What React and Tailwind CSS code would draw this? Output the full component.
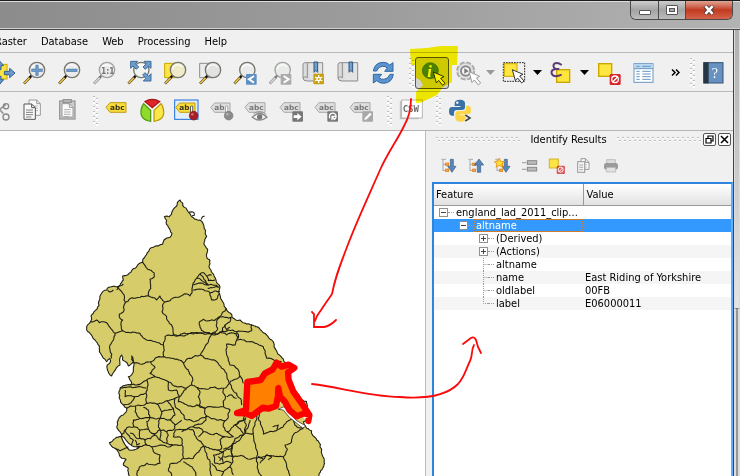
import React from "react";

/* ---------- map geometry ---------- */

function roughen(text, seed, close) {
  const pts = text.split(" ").map((p) => p.split(",").map(Number));
  if (close) pts.push(pts[0]);
  let s = seed * 7919 + 13;
  const rnd = () => {
    s = (s * 16807) % 2147483647;
    return s / 2147483647 - 0.5;
  };
  const out = [pts[0]];
  const split = (a, b) => {
    const dx = b[0] - a[0];
    const dy = b[1] - a[1];
    const len = Math.hypot(dx, dy);
    if (len < 7) {
      out.push(b);
      return;
    }
    const k = rnd() * 0.32;
    const m = [(a[0] + b[0]) / 2 - dy * k, (a[1] + b[1]) / 2 + dx * k];
    split(a, m);
    split(m, b);
  };
  for (let i = 1; i < pts.length; i++) split(pts[i - 1], pts[i]);
  return "M" + out.map((p) => p[0].toFixed(1) + " " + p[1].toFixed(1)).join("L") + (close ? "Z" : "");
}

const COAST =
  "352,38 360,30 367,38 368,46 385,66 395,80 405,88 420,90 428,98 436,120 440,140 432,158 443,178 440,200 450,212 447,230 453,240 462,258 468,270 480,290 480,315 488,335 495,352 512,370 516,382 540,390 560,402 575,404 600,418 620,435 635,450 642,470 652,488 665,502 672,515 685,522 705,532 684,545 700,605 755,680 730,695 740,715 755,722 770,750 785,780 792,805 788,835 778,850 770,880 200,880 208,858 205,835 190,825 198,808 178,795 165,775 148,758 185,740 180,725 170,710 172,695 190,675 200,655 190,645 178,625 180,595 210,585 215,578 205,560 220,545 222,520 215,498 220,515 205,528 188,510 185,495 180,525 162,545 155,558 145,545 142,525 152,512 150,505 140,515 130,505 118,485 118,468 105,450 90,430 80,416 92,395 93,378 100,370 117,345 120,325 128,305 140,300 145,292 162,288 172,290 180,285 190,270 188,258 200,256 215,242 230,230 248,216 255,200 262,188 280,172 295,168 308,162 312,150 330,142 336,130 325,112 320,92 313,80 328,80 335,68 350,48";

const NORTH = [
  "248,216 258,232 270,240 282,248 282,262 270,268 272,285 266,305 266,318",
  "172,290 180,300 188,310 192,330 196,338 225,325 266,318 290,330 300,318 313,335",
  "313,335 330,332 350,322 380,312 390,318 396,300 398,285 410,265 420,252",
  "196,338 190,352 192,362 178,372 180,385 188,390 188,422 165,430",
  "313,335 308,350 306,365 320,380 328,400 338,412 340,436",
  "92,395 110,390 118,398 130,395 150,412 165,430",
  "188,422 210,428 240,430 260,450 310,465",
  "340,436 315,440 310,465 310,500",
  "340,436 370,430 400,432 420,428 450,430 465,432",
  "420,252 430,248 440,258 455,255",
  "410,265 430,275 445,285 400,285",
  "420,252 432,268 445,285",
  "440,258 445,272 465,270",
  "445,285 475,290",
  "398,300 425,298 445,304 450,310 480,305",
  "443,295 478,292",
  "450,310 455,330 470,328 480,310",
  "480,380 490,365 500,355",
  "480,380 515,382",
  "418,395 430,388 445,392 480,380",
  "418,395 420,412 450,430",
  "480,380 470,395 465,432",
  "465,432 485,425 495,405 510,395 512,382",
  "495,405 500,420 510,412",
  "485,425 505,420 530,425 575,422 575,404",
  "530,425 535,445",
  "190,282 178,288 170,300",
  "160,300 150,306 143,300",
  "387,66 402,68 403,76 396,78",
  "424,88 428,80 434,78",
];

const MIDDLE = [
  "165,10 160,30 150,45 150,62 155,85",
  "340,12 370,18 400,8 420,10 455,12 465,5",
  "455,12 445,35 430,60 422,75 395,85 370,98 345,88 310,80 285,85 272,95 220,98",
  "272,95 285,112 270,130 285,140 260,150 230,165 210,165",
  "370,98 385,120 398,145 395,165 375,175 350,170 325,155 300,145 285,140",
  "422,75 450,88 470,95 485,115 500,130 508,160 490,175 440,178 410,172 395,165",
  "455,12 465,15 480,5 500,15 530,10",
  "508,160 520,150 540,138 535,120 510,105 505,85 498,60 500,42 525,45 530,30 528,10",
  "508,160 515,175 530,190 545,225",
  "500,200 515,195 530,205",
  "540,138 550,160",
  "260,150 258,190 262,220 290,222 320,212 345,205 358,200 350,180 325,180 325,155",
  "258,190 240,195 225,200 215,215 190,225",
  "180,175 240,170 258,175",
  "195,180 195,200 225,200",
  "358,200 380,175",
  "358,200 355,215 385,228 410,225 435,235 440,258 400,275 375,268 365,250 350,235 345,205",
  "410,172 420,185 415,200 418,225 410,225",
  "418,225 435,235 490,230 490,175",
  "440,258 470,270 495,272 505,260 510,240 490,230",
  "500,305 520,290 550,270 552,250",
  "495,272 490,290 500,305",
  "440,258 438,270 400,290 385,295 365,305",
  "400,290 430,305 470,310 495,320 520,320 500,305",
  "200,235 225,228 262,220",
  "225,228 225,245 240,265 270,262 300,265 305,245 290,222",
  "270,262 265,240 250,232",
  "305,245 325,240 340,235",
  "240,265 220,270 222,290 240,300 265,298 275,310 300,300 300,265",
  "265,298 260,275 270,262",
  "300,265 330,270 345,255 340,235 320,212",
  "330,270 345,285 340,300 320,305 300,300",
  "345,285 365,270",
  "345,300 385,295",
  "345,300 340,320 365,325 365,345 340,345 320,340 325,315 320,305",
  "240,300 240,325 255,330 285,315 300,330 320,340",
  "300,330 300,300",
  "285,315 275,310",
  "255,330 260,345 230,352",
  "222,290 195,300 205,315 220,330 215,345",
  "195,300 185,315",
  "210,310 220,312 230,325 240,325",
  "225,330 230,345 240,340",
  "260,345 275,350 300,345 320,350 340,345",
  "275,350 280,365 300,375 300,400 285,405 260,400 240,410 232,438",
  "365,345 370,385 350,400 330,402 325,420 335,438",
  "370,385 400,385 410,370 430,348 410,325 400,300 385,295",
  "370,395 395,410 408,438",
  "430,348 440,370 450,395 450,415 455,438",
  "415,320 430,305",
  "430,348 470,360 485,355 480,330 495,320",
  "470,360 490,365 515,355 518,340 545,320 550,315 525,285",
  "460,375 490,365 490,400 465,400 460,375",
  "475,380 485,385 478,392",
  "515,355 520,380",
  "490,380 505,378 520,380",
  "490,400 505,395 515,400",
  "520,380 510,410 520,435",
  "455,400 470,420 490,425 510,410",
  "490,425 485,438",
  "165,355 180,362 205,350",
];

const EAST = [
  "110,30 140,35 165,40 190,50 195,70 200,85 225,92 245,95",
  "135,265 135,310 145,290 150,270",
  "110,285 115,275 130,272 138,262",
  "170,255 165,285 160,310 135,310 105,325 98,345 70,358",
  "180,240 175,265 185,290 190,312 220,305 250,290 275,265",
  "218,290 235,285 230,298",
  "275,265 290,290 310,295",
  "310,295 280,315 275,335 255,345 262,360 250,380 260,405 270,438",
  "160,310 165,340 170,360 170,385 175,420 185,438",
  "170,385 200,375 235,380 250,380",
  "175,378 190,388 200,375 215,380 205,390",
  "98,345 100,380 130,378 170,385",
  "190,388 180,400",
];

const RIDING =
  "M142 156L182 150L195 130L218 118L230 98L245 110L266 104L283 114L264 127L266 150L280 185L305 220L328 255L325 273L328 255L312 250L290 259L268 240L255 215L240 200L235 174L234 198L228 228L205 236L188 233L155 258L138 250L111 249L138 240Z";

function DistrictMap() {
  return (
    <svg className="block h-[345px] w-[425px]" viewBox="-180 -177 1275 1035" role="img" aria-label="District map of northern England">
      <g strokeLinejoin="round" stroke="#1c1c14" strokeWidth="3.2" fill="none">
        <path d={roughen(COAST, 5, true)} fill="#d7cc6a" />
        {NORTH.map((b, i) => <path key={i} d={roughen(b, i + 40)} />)}
        <g transform="translate(0 420)">
          <path d="M183 318Q192 345 208 360Q225 364 240 350L222 350Q206 345 192 322Z" fill="#fff" />
          {MIDDLE.map((b, i) => <path key={i} d={roughen(b, i + 90)} />)}
        </g>
        <g transform="translate(420 420)">
          {EAST.map((b, i) => <path key={i} d={roughen(b, i + 180)} />)}
          <path d="M234 238L252 230L270 250L290 272L318 288L308 294L268 262L250 240Z" fill="#fff" strokeWidth="2" />
          <path d="M310 262L345 260L330 285Z" fill="#fff" stroke="none" />
          <path d={RIDING} fill="#ff8000" stroke="#f00" strokeWidth="19" strokeLinecap="round" />
        </g>
      </g>
    </svg>
  );
}

/* ---------- icons ---------- */

function Icon({ children }) {
  return (
    <svg className="block size-6 shrink-0 overflow-visible" viewBox="0 0 72 72" fill="none" aria-hidden="true">
      {children}
    </svg>
  );
}

function Lens({ gray, x = 45, fill = "#e9ebe9" }) {
  return (
    <>
      <path d={`M${x - 39} 68L${x - 20} 48`} stroke={gray ? "#8a8a8a" : "#5d5230"} strokeWidth="8" />
      <path d={`M${x - 38} 67L${x - 20} 48`} stroke={gray ? "#dcdcdc" : "#f8c53a"} strokeWidth="4" />
      <path d={`M${x - 22} 50L${x - 16} 43`} stroke={gray ? "#777" : "#111"} strokeWidth="7" />
      <circle cx={x} cy="27" r="23" fill={fill} stroke={gray ? "#a3a3a3" : "#77776f"} strokeWidth="4" />
      <path d={`M${x - 17} 24a17 17 0 0 1 30 -6`} stroke="#fff" strokeWidth="4" opacity=".8" />
    </>
  );
}

const Cursor = ({ x, y, fill = "#fff", stroke = "#333" }) => (
  <path d="M0 0L32 14L22 19L35 34L28 40L16 25L9 33Z" transform={`translate(${x} ${y})`} fill={fill} stroke={stroke} strokeWidth="3" />
);

function Tag({ gray, x = 2, y = 12 }) {
  return (
    <g transform={`translate(${x} ${y})`}>
      <path d="M2 16L14 2H62V31H14Z" fill={gray ? "#dedede" : "#f7dc3c"} stroke={gray ? "#a8a8a8" : "#c19d10"} strokeWidth="3" />
      <text x="14" y="24" className="font-['DejaVu_Sans'] text-[22px] font-bold" fill={gray ? "#777" : "#3b3416"}>abc</text>
    </g>
  );
}

function PinTag({ gray }) {
  const c = gray ? "#8b8b8b" : "#a91e22";
  return (
    <Icon>
      {!gray && <rect x="-1" y="3" width="70" height="58" stroke="#1a6fdc" strokeWidth="3" fill="#e4eefa" />}
      <path d="M2 25L14 12H60V40H14Z" fill={gray ? "#dedede" : "#f7dc3c"} stroke={gray ? "#a8a8a8" : "#c19d10"} strokeWidth="3" />
      <text x="13" y="34" className="font-['DejaVu_Sans'] text-[22px] font-bold" fill={gray ? "#777" : "#3b3416"}>ab</text>
      <path d="M50 24V42" stroke={gray ? "#999" : "#444"} strokeWidth="9" strokeLinecap="round" />
      <path d="M50 24V42" stroke="#fff" strokeWidth="4" strokeLinecap="round" />
      <circle cx="56" cy="50" r="13" fill={c} stroke={gray ? "#7b7b7b" : "#7d1518"} strokeWidth="2" />
      <circle cx="52" cy="46" r="4" fill="#fff" opacity=".35" />
    </Icon>
  );
}

function TagWith({ kind }) {
  return (
    <Icon>
      <Tag gray x={-2} y={9} />
      {kind === "eye" && (
        <g>
          <path d="M22 55Q44 32 66 55Q44 72 22 55Z" fill="#f4f4f4" stroke="#888" strokeWidth="4" />
          <circle cx="44" cy="54" r="8" fill="#777" />
          <path d="M26 44Q44 30 64 46" stroke="#999" strokeWidth="3" />
        </g>
      )}
      {kind !== "eye" && <rect x="37" y="37" width="32" height="31" rx="3" fill={kind === "edit" ? "#a8a8a8" : "#777"} />}
      <g transform="translate(4 0)">
        {kind === "move" && <path d="M37 49H48V42L61 53L48 64V57H37Z" fill="#fff" />}
        {kind === "turn" && <path d="M41 58A10 10 0 1 1 54 61L47 52M47 64V52H58" stroke="#fff" strokeWidth="4" />}
        {kind === "edit" && <path d="M39 63L41 56L56 41L61 46L46 61Z" fill="#fff" />}
      </g>
    </Icon>
  );
}

const Book = ({ extra }) => (
  <Icon>
    <path d="M9 5H62V60H15Q3 60 3 51V12Q3 5 9 5Z" fill="#dcdcdc" stroke="#8d8d8d" strokeWidth="3" />
    <path d="M16 6V50M16 50Q4 44 4 52" stroke="#8d8d8d" strokeWidth="3" />
    <path d="M22 8H60V57H22Z" fill="#e6e6e6" opacity=".7" />
    <path d="M36 3H47V34L41 28L36 34Z" fill="#6f9fd0" stroke="#31567f" strokeWidth="3" />
    {extra && (
      <>
        <rect x="34" y="38" width="32" height="32" rx="3" fill="#c8a010" />
        <path d="M50 42V66M39 48L61 60M61 48L39 60" stroke="#fff" strokeWidth="4" />
        <circle cx="50" cy="54" r="7" fill="#fff" />
        <circle cx="50" cy="54" r="3" fill="#c8a010" />
      </>
    )}
  </Icon>
);

const NoSign = ({ x, y, soft }) => (
  <g transform={`translate(${x} ${y})`} opacity={soft ? 0.75 : 1}>
    <rect width="33" height="33" rx="4" fill="#d8262b" />
    <circle cx="16" cy="16" r="10" stroke="#fff" strokeWidth="4" />
    <path d="M9 24L24 9" stroke="#fff" strokeWidth="4" />
  </g>
);

const Page = ({ x, y, w = 34, h = 46, dark = "#555" }) => (
  <g transform={`translate(${x} ${y})`}>
    <path d={`M0 0H${w - 11}L${w} 11V${h}H0Z`} fill="#fafafa" stroke={dark} strokeWidth="3" />
    <path d={`M${w - 11} 0V11H${w}`} stroke={dark} strokeWidth="3" />
    <path d={`M6 18H${w - 7}M6 25H${w - 7}M6 32H${w - 7}M6 39H${w - 12}`} stroke={dark} strokeWidth="3" opacity=".75" />
  </g>
);

const ICONS = {
  pan: (
    <Icon>
      <rect x="22" y="10" width="38" height="44" fill="#fbe443" stroke="#c9a600" strokeWidth="3" />
      <path d="M84 36L68 22V31H52V41H68V50ZM38 0L50 14H42V26H34V14H26ZM38 70L50 56H42V46H34V56H26Z" fill="#6a9acb" stroke="#35608f" strokeWidth="3" />
    </Icon>
  ),
  zoomIn: <Icon><Lens /><path d="M45 11V44M28 28H62" stroke="#4a78a8" strokeWidth="9" /><path d="M45 13V42M30 28H60" stroke="#6d9dcd" strokeWidth="5" /></Icon>,
  zoomOut: <Icon><Lens /><path d="M28 28H61" stroke="#4a78a8" strokeWidth="9" /><path d="M30 28H59" stroke="#6d9dcd" strokeWidth="5" /></Icon>,
  native: <Icon><Lens gray /><text x="27" y="38" className="font-['DejaVu_Sans_Condensed','DejaVu_Sans'] text-[25px] font-bold" fill="#777">1:1</text></Icon>,
  full: (
    <Icon>
      <Lens x={43} fill="#f1f3f1" />
      <path d="M11 1H32L25 8L35 18L28 25L18 15L11 22ZM72 1V22L65 15L55 25L48 18L58 8L51 1ZM72 60H49L57 52L47 42L54 35L65 46L72 38Z" fill="#6d9dcd" stroke="#3f6c9c" strokeWidth="3" />
    </Icon>
  ),
  zoomSel: <Icon><path d="M8 7H48V50H8Z" fill="#fbe443" stroke="#c9a600" strokeWidth="3" /><Lens x={48} fill="#efebc8" /></Icon>,
  zoomLayer: <Icon><path d="M8 7H48V50H8Z" fill="#ececec" stroke="#8d8d8d" strokeWidth="3" /><Lens x={48} fill="#e2e2e2" /></Icon>,
  last: <Icon><Lens x={46} /><rect x="42" y="39" width="32" height="32" rx="2" fill="#5e90c4" /><path d="M66 45L51 55L66 65" stroke="#fff" strokeWidth="6" /></Icon>,
  next: <Icon><Lens x={47} gray /><rect x="41" y="39" width="32" height="32" rx="2" fill="#ababab" /><path d="M50 45L65 55L50 65" stroke="#fff" strokeWidth="6" /></Icon>,
  newMark: <Book extra />,
  marks: <Book />,
  refresh: (
    <Icon>
      <path d="M4 30Q8 4 34 4Q46 4 53 12L63 5V31H38L46 21Q40 15 32 16Q20 17 14 30Z" fill="#5c92cd" stroke="#2f68a5" strokeWidth="3" />
      <path d="M64 40Q60 66 35 67Q22 67 14 59L4 66V40H29L21 50Q28 56 36 55Q48 54 54 40Z" fill="#5c92cd" stroke="#2f68a5" strokeWidth="3" />
    </Icon>
  ),
  identify: (
    <Icon>
      <circle cx="31" cy="29" r="24" fill="#4d87b8" stroke="#376b93" strokeWidth="2" />
      <text x="22" y="47" className="font-['Liberation_Serif'] text-[50px] font-bold italic" fill="#fff">i</text>
      <Cursor x={40} y={33} />
    </Icon>
  ),
  action: (
    <Icon>
      <circle cx="32" cy="30" r="24" fill="#e2e2e2" stroke="#a8a8a8" strokeWidth="9" strokeDasharray="14 5" />
      <circle cx="32" cy="30" r="23" fill="#e6e6e6" stroke="#bbb" strokeWidth="2" />
      <circle cx="32" cy="30" r="14" fill="#f5f5f5" stroke="#8a8a8a" strokeWidth="6" />
      <path d="M28 22L41 30L28 38Z" fill="#777" />
      <Cursor x={42} y={32} stroke="#999" />
    </Icon>
  ),
  select: (
    <Icon>
      <rect x="4" y="5" width="64" height="56" stroke="#222" strokeWidth="3" strokeDasharray="5 3" />
      <rect x="7" y="8" width="38" height="38" fill="#fde63f" stroke="#c9a600" strokeWidth="3" />
      <Cursor x={31} y={26} />
    </Icon>
  ),
  expression: (
    <Icon>
      <rect x="23" y="26" width="39" height="38" fill="#fde63f" stroke="#c9a600" strokeWidth="4" />
      <path d="M38 12Q26 2 16 8Q9 17 20 24Q5 26 8 38Q15 52 38 41M20 24H31" stroke="#5e3a72" strokeWidth="6" />
    </Icon>
  ),
  deselect: <Icon><rect x="8" y="8" width="39" height="38" fill="#fde63f" stroke="#c9a600" strokeWidth="4" /><NoSign x={41} y={39} /></Icon>,
  table: (
    <Icon>
      <rect x="9" y="8" width="57" height="56" fill="#fff" stroke="#6795c4" strokeWidth="3" />
      <rect x="10" y="9" width="55" height="14" fill="#b7d8ee" />
      <path d="M9 23H66M16 16H26M34 16H59M16 31H26M34 31H59M16 39H26M34 39H59M16 47H26M34 47H59M16 55H26M34 55H59" stroke="#6795c4" strokeWidth="3" />
    </Icon>
  ),
  help: (
    <Icon>
      <rect x="5" y="5" width="58" height="61" fill="#6791c0" stroke="#34516f" strokeWidth="3" />
      <rect x="5" y="4" width="15" height="63" fill="#263645" />
      <text x="29" y="50" className="font-['Liberation_Serif'] text-[42px]" fill="#fff">?</text>
    </Icon>
  ),
  cut: <Icon><path d="M20 8L52 44M60 16L30 40" stroke="#999" strokeWidth="5" /><circle cx="60" cy="22" r="8" stroke="#888" strokeWidth="4" /><circle cx="60" cy="54" r="9" stroke="#888" strokeWidth="4" /></Icon>,
  copy: <Icon><Page x={24} y={3} dark="#999" /><Page x={9} y={15} /></Icon>,
  paste: <Icon><rect x="11" y="6" width="46" height="54" fill="#ccc" stroke="#999" strokeWidth="4" /><rect x="21" y="2" width="25" height="8" fill="#bbb" stroke="#888" strokeWidth="3" /><Page x={18} y={14} w={33} h={40} dark="#999" /></Icon>,
  label: <Icon><Tag x={1} y={9} /></Icon>,
  diagram: (
    <Icon>
      <circle cx="37" cy="35" r="33" fill="#fff" />
      <path d="M37 26L15 8Q37 -6 59 8Z" fill="#e02626" stroke="#a51818" strokeWidth="4" />
      <path d="M32 34V67Q-3 62 4 30Q6 20 11 14Z" fill="#8edb2c" stroke="#559a12" strokeWidth="4" />
      <path d="M42 34V67Q77 62 70 30Q68 20 63 14Z" fill="#fbe74a" stroke="#bd9c0e" strokeWidth="4" />
    </Icon>
  ),
  pin: <PinTag />,
  pinOff: <PinTag gray />,
  showLabels: <TagWith kind="eye" />,
  moveLabel: <TagWith kind="move" />,
  turnLabel: <TagWith kind="turn" />,
  editLabel: <TagWith kind="edit" />,
  csw: (
    <Icon>
      <path d="M4 8H58V59H4Z" fill="#c9c9c9" stroke="#aaa" strokeWidth="2" />
      <rect x="8" y="3" width="62" height="54" fill="#fff" stroke="#b5b5b5" strokeWidth="3" />
      <text x="11" y="38" className="font-['DejaVu_Sans_Mono'] text-[27px] font-bold" fill="#6b6b6b">CSW</text>
    </Icon>
  ),
  python: (
    <Icon>
      <path d="M36 2Q20 2 20 13V21H37V24H12Q3 24 3 37Q3 50 12 50H18V41Q18 33 27 33H42Q51 33 51 25V13Q51 2 36 2Z" fill="#3872a4" />
      <path d="M38 68Q54 68 54 57V49H37V46H60Q69 46 69 33Q69 20 60 20H54V28Q54 36 46 36H31Q22 36 22 45V57Q22 68 38 68Z" fill="#fbd548" />
      <circle cx="28" cy="11" r="3.5" fill="#fff" />
      <path d="M52 48L66 57L52 66" stroke="#fff" strokeWidth="9" />
      <path d="M52 48L66 57L52 66" stroke="#444" strokeWidth="5" />
    </Icon>
  ),
};

/* ---------- panel icons (3 units per pixel, 18px box) ---------- */

function SmallIcon({ children }) {
  return <svg className="block size-[18px]" viewBox="0 0 54 54" fill="none" aria-hidden="true">{children}</svg>;
}

const Branches = () => (
  <>
    <path d="M4 7H18M9 8V42M9 22H18M9 40H18" stroke="#aaa" strokeWidth="3" />
    <rect x="17" y="18" width="9" height="8" fill="#f7a23c" stroke="#e07b10" strokeWidth="2" />
    <rect x="17" y="36" width="9" height="8" fill="#f7a23c" stroke="#e07b10" strokeWidth="2" />
  </>
);
const Down = () => <path d="M31 7H40V28H48L36 46L23 28H31Z" fill="#5b86b3" stroke="#365f8c" strokeWidth="2" />;

const PANEL_ICONS = [
  ["Expand tree", <SmallIcon><Branches /><Down /></SmallIcon>],
  ["Collapse tree", <SmallIcon><Branches /><path d="M31 46H41V24H50L36 6L22 24H31Z" fill="#5b86b3" stroke="#365f8c" strokeWidth="2" /></SmallIcon>],
  ["Expand new results", <SmallIcon><Branches /><Down /><path d="M16 3L20 13L31 14L23 21L26 31L16 25L6 31L9 21L1 14L12 13Z" fill="#fbe03c" stroke="#eda01c" strokeWidth="3" /></SmallIcon>],
  ["Open form", <SmallIcon><path d="M3 17H16M3 37H16" stroke="#aaa" strokeWidth="4" /><rect x="19" y="11" width="28" height="11" fill="#bbb" stroke="#888" strokeWidth="3" /><rect x="19" y="31" width="28" height="11" fill="#bbb" stroke="#888" strokeWidth="3" /></SmallIcon>],
  ["Clear results", <SmallIcon><rect x="4" y="6" width="27" height="27" fill="#fbe443" stroke="#d2b32a" strokeWidth="3" /><g transform="translate(26 26) scale(.75)"><NoSign x={0} y={0} soft /></g></SmallIcon>],
  ["Copy feature", <SmallIcon><Page x={18} y={5} w={24} h={32} dark="#999" /><rect x="8" y="14" width="21" height="32" fill="#f3f3f3" stroke="#999" strokeWidth="3" /><path d="M13 24H24M13 31H24M13 38H24" stroke="#aaa" strokeWidth="3" /></SmallIcon>],
  ["Print", <SmallIcon><path d="M14 8H40V20H14Z" fill="#ddd" stroke="#aaa" strokeWidth="2" /><rect x="6" y="18" width="42" height="20" rx="7" fill="#9a9a9a" /><path d="M13 31H41V45H13Z" fill="#e2e2e2" stroke="#aaa" strokeWidth="2" /></SmallIcon>],
];

/* ---------- small parts ---------- */

function Tool({ name, icon }) {
  return (
    <button type="button" aria-label={name} className="flex h-8 w-[35px] shrink-0 items-center justify-center">
      {icon}
    </button>
  );
}

function Grip() {
  return (
    <svg className="block h-[30px] w-1.5 shrink-0" aria-hidden="true">
      {Array.from({ length: 12 }, (_, i) => (
        <g key={i}>
          <rect x={i % 2 ? 3 : 0} y={1 + Math.floor(i / 2) * 5 + (i % 2 ? 2 : 0)} width="2" height="2" fill="#fff" />
          <rect x={i % 2 ? 3 : 0} y={Math.floor(i / 2) * 5 + (i % 2 ? 2 : 0)} width="2" height="1" fill="#bdbdbd" />
        </g>
      ))}
    </svg>
  );
}

function TitleDots({ id }) {
  return (
    <svg className="block h-[6px] min-w-0 flex-1" aria-hidden="true">
      <defs>
        <pattern id={id} width="5" height="6" patternUnits="userSpaceOnUse">
          <rect x="0" y="0" width="2" height="1" fill="#bdbdbd" />
          <rect x="0" y="1" width="2" height="1" fill="#fff" />
          <rect x="2" y="3" width="2" height="1" fill="#bdbdbd" />
          <rect x="2" y="4" width="2" height="1" fill="#fff" />
        </pattern>
      </defs>
      <rect width="100%" height="6" fill={`url(#${id})`} />
    </svg>
  );
}

function Drop({ name, muted }) {
  return (
    <button type="button" aria-label={name} className="flex h-8 w-3 shrink-0 items-center justify-center">
      <svg className={muted ? "block h-[5px] w-[9px] text-[#999]" : "block h-[5px] w-[9px] text-black"} viewBox="0 0 9 5"><path d="M0 0H9L4.5 5Z" fill="currentColor" /></svg>
    </button>
  );
}

function Expander({ open, name }) {
  return (
    <button type="button" aria-label={name} className="size-[9px] shrink-0 border border-[#919191] bg-white">
      <svg className="block size-[7px]" viewBox="0 0 7 7"><path d={open ? "M1 3.5H6" : "M1 3.5H6M3.5 1V6"} stroke="#444" /></svg>
    </button>
  );
}

const ROWS = [
  { label: "england_lad_2011_clip...", depth: 0, open: true },
  { label: "altname", depth: 1, open: true, selected: true },
  { label: "(Derived)", depth: 2, open: false },
  { label: "(Actions)", depth: 2, open: false },
  { label: "altname", depth: 2 },
  { label: "name", depth: 2, value: "East Riding of Yorkshire" },
  { label: "oldlabel", depth: 2, value: "00FB" },
  { label: "label", depth: 2, value: "E06000011", last: true },
];

const INDENT = ["pl-[5px]", "pl-[25px]", "pl-[45px]"];

function TreeRow({ row, index }) {
  const tone = row.selected ? "bg-[#3399ff] text-white" : index % 2 ? "bg-[#f5f5f5]" : "bg-white";
  return (
    <tr className={"h-[13px] " + tone}>
      <td className="h-[13px] p-0">
        <div className={"flex h-[13px] items-center " + INDENT[row.depth]}>
          {row.open === undefined ? (
            <svg className="block h-[13px] w-[9px] shrink-0" aria-hidden="true">
              <path d={row.last ? "M4.5 0V6.5H9" : "M4.5 0V13M4.5 6.5H9"} stroke="#999" strokeDasharray="1 1" fill="none" />
            </svg>
          ) : (
            <Expander open={row.open} name={(row.open ? "Collapse " : "Expand ") + row.label} />
          )}
          <span className="h-px w-1.5 shrink-0 border-t border-dotted border-[#999]" />
          <span className={row.selected ? "h-[13px] flex-1 border border-dotted border-[#d08030] pl-px leading-[11px]" : "h-[13px] pl-0.5 leading-[13px]"}>{row.label}</span>
        </div>
      </td>
      <td className="h-[13px] p-0 pl-0.5 leading-[13px]">{row.value}</td>
    </tr>
  );
}

const WINDOW_BUTTON = "flex h-[18px] items-center justify-center border-r border-[#4a4a4a] bg-linear-to-b from-[#cdcdcd] via-[#a3a3a3] to-[#bcbcbc]";

/* ---------- page ---------- */

export default function App() {
  return (
    <div className="relative flex min-h-screen flex-col overflow-hidden bg-[#f0f0f0] font-['DejaVu_Sans_Condensed','DejaVu_Sans',sans-serif] text-[11px] text-black">
      <header className="flex h-[30px] items-start justify-end border-t border-b border-t-[#1c1c1c] border-b-[#4a4a4a] bg-linear-to-r from-[#8c8c8c] via-[#9c9c9c] to-[#b3b3b3] pr-[7px] shadow-[inset_0_1px_0_#dedede,inset_0_-1px_0_#cfcfcf]">
        <div className="flex overflow-hidden rounded-b-md border border-t-0 border-[#4a4a4a]">
          <button type="button" aria-label="Minimize" className={WINDOW_BUTTON + " w-7"}>
            <span className="mt-1 h-[5px] w-3 rounded-[1px] border border-[#555] bg-white" />
          </button>
          <button type="button" aria-label="Maximize" className={WINDOW_BUTTON + " w-[27px]"}>
            <span className="flex h-2.5 w-3 items-center justify-center rounded-[1px] border border-[#555] bg-white">
              <span className="h-1 w-1.5 border border-[#555] bg-[#aaa]" />
            </span>
          </button>
          <button type="button" aria-label="Close" className="flex h-[18px] w-[46px] items-center justify-center bg-linear-to-b from-[#e0a294] via-[#c23a20] to-[#d5624a]">
            <svg className="block h-2.5 w-3" viewBox="0 0 12 10"><path d="M2 1L10 9M10 1L2 9" stroke="#4a3a3a" strokeWidth="4.4" /><path d="M2.4 1.2L9.6 8.8M9.6 1.2L2.4 8.8" stroke="#fff" strokeWidth="2.6" /></svg>
          </button>
        </div>
      </header>

      <div className="flex flex-1">
        <div className="flex min-w-0 flex-1 flex-col">
          <nav className="-ml-3 flex h-[23px] items-center border-b border-[#b9b9b9] pt-0.5" aria-label="Menu">
            {["Raster", "Database", "Web", "Processing", "Help"].map((m) => (
              <button type="button" key={m} className="px-[7px]">{m}</button>
            ))}
          </nav>

          <div className="flex h-[39px] items-center border-b border-[#b9b9b9] pt-px">
            <div className="-ml-[19px] flex">
              <Tool name="Pan" icon={ICONS.pan} />
              <Tool name="Zoom in" icon={ICONS.zoomIn} />
              <Tool name="Zoom out" icon={ICONS.zoomOut} />
              <Tool name="Zoom to native resolution" icon={ICONS.native} />
              <Tool name="Zoom full" icon={ICONS.full} />
              <Tool name="Zoom to selection" icon={ICONS.zoomSel} />
              <Tool name="Zoom to layer" icon={ICONS.zoomLayer} />
              <Tool name="Zoom last" icon={ICONS.last} />
              <Tool name="Zoom next" icon={ICONS.next} />
              <Tool name="New bookmark" icon={ICONS.newMark} />
              <Tool name="Show bookmarks" icon={ICONS.marks} />
              <Tool name="Refresh" icon={ICONS.refresh} />
            </div>
            <div className="flex items-center pl-2">
              <Grip />
              <button type="button" aria-label="Identify features" aria-pressed="true" className="flex h-8 w-[34px] items-center justify-center rounded-[3px] border border-[#555] bg-[#d2d2d2]">{ICONS.identify}</button>
              <Tool name="Run feature action" icon={ICONS.action} />
              <Drop name="Actions menu" muted />
              <Tool name="Select features" icon={ICONS.select} />
              <Drop name="Selection menu" />
              <Tool name="Select by expression" icon={ICONS.expression} />
              <Drop name="Expression menu" />
              <Tool name="Deselect all" icon={ICONS.deselect} />
              <Tool name="Open attribute table" icon={ICONS.table} />
            </div>
            <button type="button" aria-label="More tools" className="flex h-8 w-[30px] items-center justify-center">
              <svg className="block h-[7px] w-[9px]" viewBox="0 0 9 7"><path d="M1 0.5L4 3.5L1 6.5M5 0.5L8 3.5L5 6.5" stroke="#000" strokeWidth="1.5" fill="none" /></svg>
            </button>
            <Grip />
            <Tool name="Help" icon={ICONS.help} />
          </div>

          <div className="flex h-[39px] items-center border-b border-[#b5b5b5]">
            <div className="-ml-5 flex">
              <Tool name="Cut" icon={ICONS.cut} />
              <Tool name="Copy" icon={ICONS.copy} />
              <Tool name="Paste" icon={ICONS.paste} />
            </div>
            <div className="pl-2"><Grip /></div>
            <div className="flex">
              <Tool name="Labeling" icon={ICONS.label} />
              <Tool name="Diagrams" icon={ICONS.diagram} />
              <Tool name="Highlight pinned labels" icon={ICONS.pin} />
              <Tool name="Pin labels" icon={ICONS.pinOff} />
              <Tool name="Show or hide labels" icon={ICONS.showLabels} />
              <Tool name="Move label" icon={ICONS.moveLabel} />
              <Tool name="Rotate label" icon={ICONS.turnLabel} />
              <Tool name="Change label" icon={ICONS.editLabel} />
            </div>
            <div className="pl-2"><Grip /></div>
            <Tool name="Catalog search" icon={ICONS.csw} />
            <div className="pl-2"><Grip /></div>
            <Tool name="Python console" icon={ICONS.python} />
          </div>

          <main className="flex flex-1">
            <section className="min-w-0 flex-1 border-r border-[#bdbdbd] bg-white">
              <DistrictMap />
            </section>

            <aside className="flex w-[307px] shrink-0 flex-col pl-1.5">
              <div className="flex h-[17px] items-center gap-2.5 pl-1">
                <TitleDots id="dots-left" />
                <h2 className="pt-0.5">Identify Results</h2>
                <TitleDots id="dots-right" />
                <div className="-ml-2 flex gap-0.5 pr-0.5">
                  <button type="button" aria-label="Float panel" className="flex size-[13px] items-center justify-center rounded-[2px] border border-[#555] bg-white">
                    <svg className="block size-[9px]" viewBox="0 0 9 9"><path d="M3 3V1H8V6H6M1 3.5H6V8H1Z" stroke="#000" strokeWidth="1.2" fill="none" /></svg>
                  </button>
                  <button type="button" aria-label="Close panel" className="flex size-[13px] items-center justify-center rounded-[2px] border border-[#555] bg-white">
                    <svg className="block size-[9px]" viewBox="0 0 9 9"><path d="M1 1L8 8M8 1L1 8" stroke="#000" strokeWidth="1.5" /></svg>
                  </button>
                </div>
              </div>
              <div className="flex h-[34px] items-center pt-0.5 pl-[3px]">
                {PANEL_ICONS.map(([name, icon]) => (
                  <button type="button" key={name} aria-label={name} className="flex w-[27px] justify-center">{icon}</button>
                ))}
              </div>
              <div className="flex-1 border-2 border-b-0 border-[#2f84dc] border-r-[#62adfb] bg-white">
                <table className="w-full table-fixed border-collapse">
                  <thead>
                    <tr className="h-[21px] bg-linear-to-b from-white to-[#e2e2e2] text-left">
                      <th className="h-[21px] w-[149px] border-r border-b border-[#999] p-0 pt-0.5 pl-0.5 font-normal">Feature</th>
                      <th className="h-[21px] border-b border-[#999] p-0 pt-0.5 pl-[3px] font-normal">Value</th>
                    </tr>
                  </thead>
                  <tbody>
                    {ROWS.map((row, i) => <TreeRow key={i} row={row} index={i} />)}
                  </tbody>
                </table>
              </div>
            </aside>
          </main>
        </div>

        <div className="flex w-[7px] shrink-0 flex-col border-l border-[#444]">
          <div className="h-[278px] border-x border-[#dcdcdc] bg-linear-to-b from-[#b0b0b0] to-[#e4e4e4]" />
          <div className="flex-1 border-x-2 border-t border-x-[#dcdcdc] border-t-[#777] bg-[#979797]" />
        </div>
      </div>

      <svg className="pointer-events-none absolute top-0 left-0 h-[476px] w-[740px] mix-blend-multiply" viewBox="0 0 740 476" aria-hidden="true">
        <path d="M410 49L427 48L440 46L458 46L457 65L452 65V82L443 87L437 95L420 103H416V92L423 85L420 80L416 78V65H411Z" fill="#fbf400" />
      </svg>
      <svg className="pointer-events-none absolute top-0 left-0 h-[476px] w-[740px]" viewBox="0 0 740 476" fill="none" stroke="#fa0a0a" strokeWidth="1.8" strokeLinecap="round" aria-hidden="true">
        <path d="M411 99Q411 114 404 126C398 139 388 152 380 170C370 193 358 218 347 247C339 268 335 278 332 294Q325 304 317 316L315 321M312 312L314 314V327H324Q330 326 336 320" />
        <path d="M312 384C340 387 365 396 400 397C425 399 446 396 458 384C465 376 465 371 470 361C473 355 471 350 474 345M463 344L471 338Q474 336 476 340L478 347L481 353" />
      </svg>
    </div>
  );
}
